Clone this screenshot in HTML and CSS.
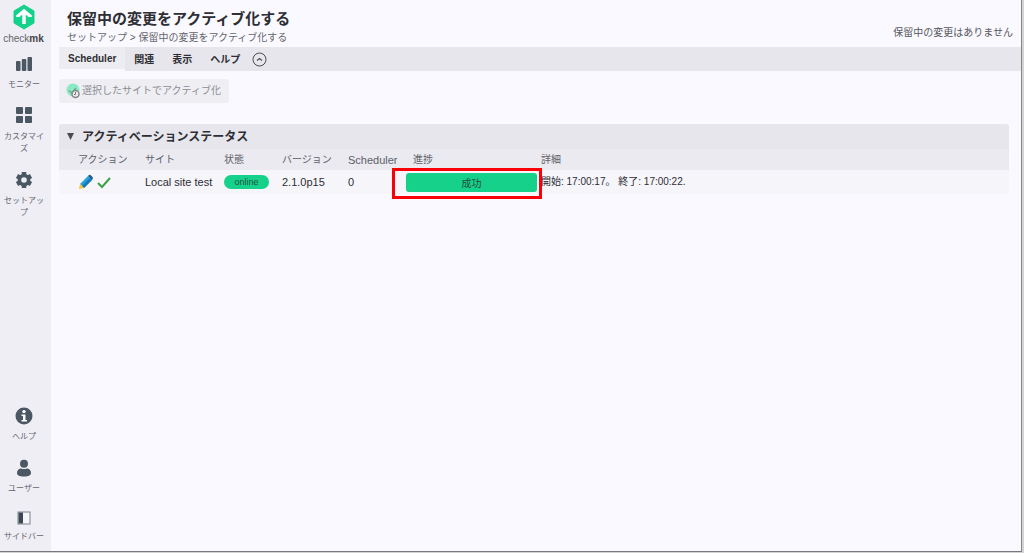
FILE: index.html
```html
<!DOCTYPE html>
<html lang="ja">
<head>
<meta charset="utf-8">
<title>保留中の変更をアクティブ化する</title>
<link rel="stylesheet" href="styles.css">
</head>
<body>
<div class="app">
  <nav class="sidebar">
    <a class="brand" href="#">
      <svg width="22" height="26" viewBox="0 0 22 26"><path d="M11 1 21 7v12l-10 6-10-6V7z" fill="#15d18a" stroke="#15d18a" stroke-linejoin="round"/><path d="M11 20v-12M5 13v-1l6-5 6 5v1" fill="none" stroke="#fff" stroke-width="3.500"/></svg>
      <span class="brand-name">check<b>mk</b></span>
    </a>
    <a class="nav-item monitor" href="#">
      <svg width="18" height="16" viewBox="0 0 18 16" fill="#4b5762"><rect x="1" y="5" width="4.500" height="10" rx="1"/><rect x="6.800" y="3" width="4.500" height="12" rx="1"/><rect x="12.500" y="1" width="4.500" height="14" rx="1"/></svg>
      <span>モニター</span>
    </a>
    <a class="nav-item customize" href="#">
      <svg width="18" height="18" viewBox="0 0 18 18" fill="#4b5762"><rect x="1" y="1" width="7" height="7" rx="1"/><rect x="10" y="1" width="7" height="7" rx="1"/><rect x="1" y="10" width="7" height="7" rx="1"/><rect x="10" y="10" width="7" height="7" rx="1"/></svg>
      <span>カスタマイズ</span>
    </a>
    <a class="nav-item setup" href="#">
      <svg width="18" height="18" viewBox="0 0 18 18"><g stroke="#4b5762" stroke-width="4.500"><path d="M9 1v16M2 5l14 8M2 13l14-8"/></g><circle cx="9" cy="9" r="6.300" fill="#4b5762"/><circle cx="9" cy="9" r="2.800" fill="#eeeef4"/></svg>
      <span>セットアップ</span>
    </a>
    <div class="nav-bottom">
      <a class="nav-item help" href="#">
        <svg width="18" height="18" viewBox="0 0 18 18"><circle cx="9" cy="9" r="8.500" fill="#4b5762"/><circle cx="9" cy="4.600" r="1.700" fill="#fff"/><path d="M6.500 7.500h4v5.500h1.500v1.500h-5.500v-1.500h1.500v-4h-1.500z" fill="#fff"/></svg>
        <span>ヘルプ</span>
      </a>
      <a class="nav-item user" href="#">
        <svg width="18" height="18" viewBox="0 0 18 18" fill="#4b5762"><circle cx="9" cy="4.700" r="4"/><path d="M2 14c0-3 2-4.500 4-4.500q3 1.200 6 0c2 0 4 1.500 4 4.500 0 2-2 3.500-7 3.500S2 16 2 14z"/></svg>
        <span>ユーザー</span>
      </a>
      <a class="nav-item bar" href="#">
        <svg width="14" height="14" viewBox="0 0 14 14"><rect x="1" y="1" width="12" height="12" fill="#f6f6fa" stroke="#7c858c"/><path d="M1.500 1.500h4.500v11H1.500z" fill="#3d4852"/></svg>
        <span>サイドバー</span>
      </a>
    </div>
  </nav>
  <main class="content">
    <header class="page-head">
      <div>
        <h1>保留中の変更をアクティブ化する</h1>
        <div class="crumbs"><a href="#">セットアップ</a> &gt; <a href="#">保留中の変更をアクティブ化する</a></div>
      </div>
      <div class="pending">保留中の変更はありません</div>
    </header>
    <div class="menubar">
      <button class="menu active">Scheduler</button>
      <button class="menu">関連</button>
      <button class="menu">表示</button>
      <button class="menu">ヘルプ</button>
      <button class="menu-toggle" aria-label="折りたたむ">
        <svg width="15" height="15" viewBox="0 0 15 15" fill="none" stroke="#4a4a50"><circle cx="7.500" cy="7.500" r="6.500"/><path d="M5 8.500 7.500 6.500 10 8.500" stroke-width="1.200"/></svg>
      </button>
    </div>
    <div class="actions">
      <button class="activate" disabled>
        <svg width="15" height="16" viewBox="0 0 15 16"><circle cx="7" cy="7" r="6.500" fill="#8aeac4"/><path d="M3 7.500 6 10 10 5" fill="none" stroke="#70a78f" stroke-width="1.500"/><circle cx="9.500" cy="11" r="3.500" fill="#eee" stroke="#85858b" stroke-width="1.500"/><path d="M9.500 9v2.500H8" fill="none" stroke="#77777d"/></svg>
        <span>選択したサイトでアクティブ化</span>
      </button>
    </div>
    <section class="status">
      <h2><svg width="7" height="7" viewBox="0 0 7 7"><path d="M0 0h7L3.500 7z" fill="#4b4b52"/></svg>アクティベーションステータス</h2>
      <table>
        <colgroup><col class="c-action"><col class="c-site"><col class="c-state"><col class="c-version"><col class="c-sched"><col class="c-progress"><col></colgroup>
        <thead>
          <tr><th class="first">アクション</th><th>サイト</th><th>状態</th><th>バージョン</th><th class="latin">Scheduler</th><th class="progress-head">進捗</th><th>詳細</th></tr>
        </thead>
        <tbody>
          <tr>
            <td class="first"><div class="icons">
              <a href="#" aria-label="編集"><svg width="16" height="16" viewBox="0 0 16 16"><path d="M2 10 10 2l4 4-8 8z" fill="#25a2dc"/><path d="m4 12 8-8 2 2-8 8z" fill="#1679b6"/><path d="m10 2 1-1q1-.5 2 .5l1.500 1.500q.8 1 0 2L14 6z" fill="#175a91"/><path d="M2 10 1 15l5-1z" fill="#f6c635"/></svg></a>
              <svg width="16" height="16" viewBox="0 0 16 16"><path d="M2 9 6 13 14 4" fill="none" stroke="#3d9f46" stroke-width="2"/></svg>
            </div></td>
            <td class="latin">Local site test</td>
            <td><span class="badge">online</span></td>
            <td class="latin">2.1.0p15</td>
            <td class="latin">0</td>
            <td><div class="progress">成功<span class="highlight"></span></div></td>
            <td>開始: 17:00:17。 終了: 17:00:22.</td>
          </tr>
        </tbody>
      </table>
    </section>
  </main>
</div>
</body>
</html>
```
FILE: styles.css
```css
* { box-sizing: border-box; }
body {
  margin: 0;
  background: #d3d3d3;
  color: #2e2e34;
  font: 10px/12px "Liberation Sans", "Noto Sans CJK JP", sans-serif;
}
a { color: inherit; text-decoration: none; }
svg { display: block; flex: none; }
button { font: inherit; color: inherit; border: 0; background: none; }
.app {
  display: flex;
  height: calc(100vh - 1px);
  margin-right: 2px;
  background: #f9f9ff;
  border-right: 1px solid #85858a;
  border-bottom: 1px solid #77777d;
}
.sidebar {
  display: flex;
  flex-direction: column;
  flex: none;
  width: 51px;
  padding: 4px 4px 8px 0;
  background: #eeeef4;
  color: #65656c;
}
.brand, .nav-item {
  display: flex;
  flex-direction: column;
  align-items: center;
  text-align: center;
}
.brand { gap: 2px; }
.brand-name { font-size: 10px; line-height: 14px; }
.brand b { color: #44444a; }
.nav-item { font-size: 8px; padding-left: 1px; }
.monitor { gap: 7px; margin-top: 10px; }
.customize { gap: 7px; margin-top: 15px; }
.customize span, .setup span { padding: 0 2px; }
.setup { gap: 6px; margin-top: 16px; }
.nav-bottom { display: flex; flex-direction: column; gap: 16px; margin-top: auto; }
.help, .user, .bar { gap: 6px; }
.content { flex: 1; min-width: 0; }
.page-head {
  display: flex;
  justify-content: space-between;
  align-items: flex-end;
  padding: 8px 8px 2px 16px;
}
h1 { margin: 0; font-size: 15px; line-height: 22px; }
.crumbs { line-height: 15px; color: #65656c; }
.pending { line-height: 24px; color: #56565c; }
.menubar {
  display: flex;
  height: 24px;
  margin-left: 8px;
  background: #e6e6ec;
}
.menu { padding: 1px 9px 0; font-weight: bold; }
.menu.active { background: #ececf1; border-bottom: 2px solid #f9f9ff; }
.menu-toggle { padding: 0 3px; }
.actions { padding: 8px; }
.activate {
  display: flex;
  align-items: center;
  gap: 1px;
  height: 24px;
  padding: 0 8px 0 7px;
  border-radius: 3px;
  background: #eeeef3;
  color: #8d8d94;
}
.status { margin: 13px 12px 0 8px; }
h2 {
  display: flex;
  align-items: center;
  gap: 8px;
  height: 25px;
  margin: 0;
  padding-left: 8px;
  border-radius: 3px 3px 0 0;
  background: #e6e6ec;
  font-size: 12px;
}
table { width: 100%; table-layout: fixed; border-collapse: collapse; }
.c-action { width: 86px; }
.c-site { width: 79px; }
.c-state { width: 58px; }
.c-version { width: 66px; }
.c-sched { width: 58px; }
.c-progress { width: 135px; }
th { height: 21px; padding: 0; background: #eaeaf0; color: #606067; font-weight: normal; text-align: left; }
td { height: 24px; padding: 0; background: #f5f5fa; }
.first { padding-left: 19px; }
.progress-head { padding-left: 7px; }
.latin { font-size: 11px; }
.icons { display: flex; gap: 2px; }
.badge {
  display: block;
  width: 45px;
  border-radius: 7px;
  background: #15d18a;
  color: #25523f;
  font-size: 9px;
  line-height: 14px;
  text-align: center;
}
.progress {
  position: relative;
  width: 131px;
  height: 19px;
  border-radius: 3px;
  background: #15d18a;
  color: #244d3c;
  line-height: 21px;
  text-align: center;
}
.highlight {
  position: absolute;
  inset: -5px -5px -7px -14px;
  border: 3px solid #fb0007;
}
```
